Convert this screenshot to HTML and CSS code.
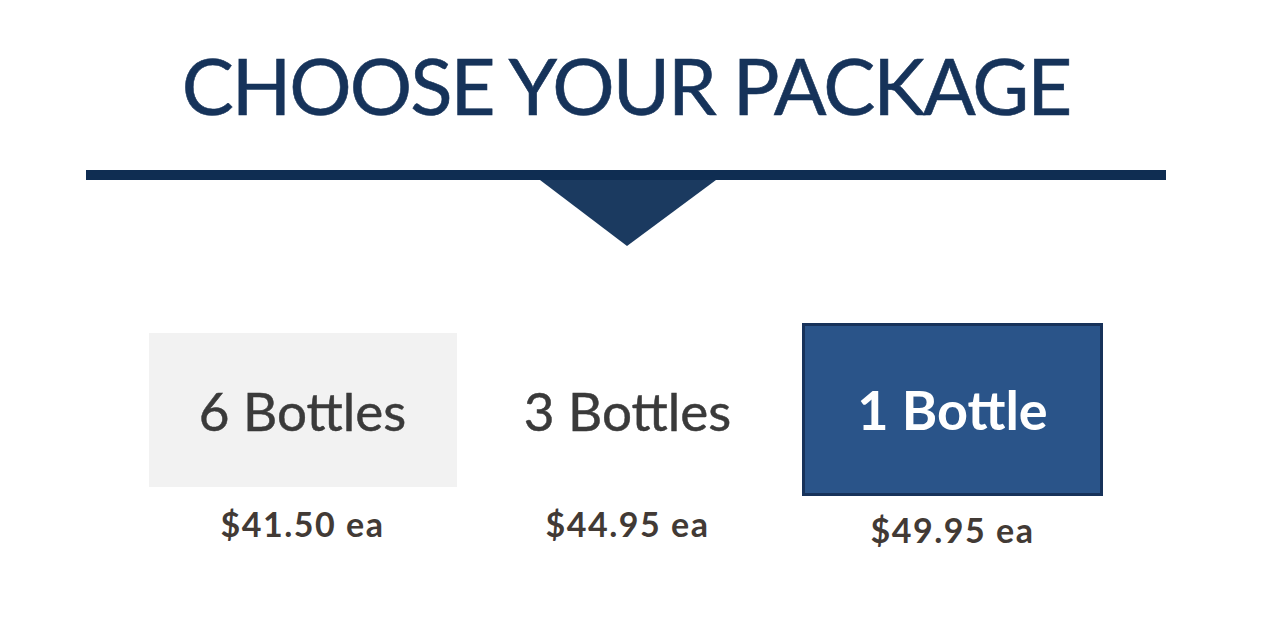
FILE: index.html
```html
<!DOCTYPE html>
<html>
<head>
<meta charset="utf-8">
<link rel="stylesheet" href="styles.css">
</head>
<body>
<section class="package">
  <h1 class="title">CHOOSE YOUR PACKAGE</h1>
  <div class="divider">
    <div class="rule"></div>
    <svg class="arrow" width="176" height="66" viewBox="0 0 176 66"><polygon points="0,0 176,0 87,66" fill="#1b3a60"/></svg>
  </div>
  <div class="options">
    <div class="option">
      <div class="box box-light">6 Bottles</div>
      <div class="price">$41.50 ea</div>
    </div>
    <div class="option">
      <div class="box box-plain">3 Bottles</div>
      <div class="price">$44.95 ea</div>
    </div>
    <div class="option option-selected">
      <div class="box box-selected">1 Bottle</div>
      <div class="price">$49.95 ea</div>
    </div>
  </div>
</section>
</body>
</html>
```

FILE: styles.css
```css
html, body {
  margin: 0;
  padding: 0;
  background: #ffffff;
}
body {
  width: 1280px;
  height: 642px;
  overflow: hidden;
  font-family: Lato, "Open Sans", sans-serif;
}
.package {
  width: 1080px;
  margin-left: 86px;
  padding-top: 40px;
}
.title {
  margin: 0;
  text-align: center;
  font-weight: 400;
  font-size: 78px;
  line-height: 90px;
  color: #16335a;
  letter-spacing: -2px;
  -webkit-text-stroke: 0.6px #16335a;
}
.divider {
  position: relative;
  margin-top: 40px;
  height: 75px;
}
.rule {
  height: 10px;
  background: #0f2d52;
}
.arrow {
  position: absolute;
  left: 454px;
  top: 10px;
  display: block;
}
.options {
  display: grid;
  grid-template-columns: repeat(3, 325px);
  margin-left: 54px;
  margin-top: 78px;
}
.option {
  display: flex;
  flex-direction: column;
  align-items: center;
}
.box {
  display: flex;
  align-items: center;
  justify-content: center;
  box-sizing: border-box;
  width: 308px;
  height: 154px;
  margin-top: 10px;
  font-size: 53px;
  color: #3a3a3a;
  -webkit-text-stroke: 0.5px #3a3a3a;
}
.box-light {
  background: #f2f2f2;
}
.box-selected {
  width: 301px;
  height: 173px;
  margin-top: 0;
  background: #2a5489;
  border: 3px solid #17325a;
  color: #ffffff;
  font-weight: 700;
  font-size: 54px;
  -webkit-text-stroke: 0;
}
.price {
  margin-top: 16px;
  font-size: 34px;
  letter-spacing: 1.5px;
  font-weight: 700;
  color: #423a35;
}
.option-selected .price {
  margin-top: 13px;
}
```
